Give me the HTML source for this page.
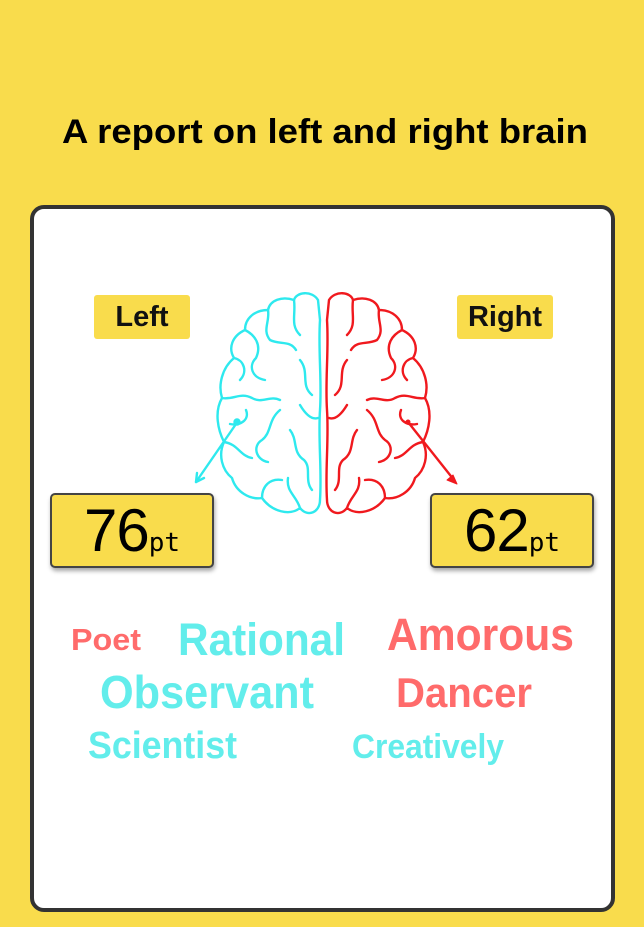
<!DOCTYPE html>
<html><head><meta charset="utf-8"><style>
html,body{margin:0;padding:0;}
body{width:644px;height:927px;background:#F9DC4C;position:relative;overflow:hidden;font-family:"Liberation Sans",sans-serif;}
.card{position:absolute;left:30px;top:205px;width:577px;height:699px;background:#fff;border:4px solid #333;border-radius:14px;}
.lab{position:absolute;top:295px;width:96px;height:44px;background:#F9DC4C;border-radius:3px;font-weight:bold;font-size:29px;text-align:center;line-height:44px;color:#111;}
.score{position:absolute;top:493px;width:164px;height:75px;background:#F9DC4C;border:2px solid #444;border-radius:5px;box-shadow:1px 3px 4px rgba(0,0,0,.35);box-sizing:border-box;text-align:center;color:#000;}
.score b{font-weight:normal;font-family:"Liberation Sans",sans-serif;font-size:60px;line-height:72px;letter-spacing:-1px;}
.score i{font-style:normal;font-family:"DejaVu Sans Mono","Liberation Mono",monospace;font-size:26px;}
svg{position:absolute;left:0;top:0;}
</style></head><body>
<div class="card"></div>
<div class="lab" style="left:94px">Left</div>
<div class="lab" style="left:457px">Right</div>
<div class="score" style="left:50px"><b>76</b><i>pt</i></div>
<div class="score" style="left:430px"><b>62</b><i>pt</i></div>
<svg width="644" height="927" viewBox="0 0 644 927">
<text x="62" y="143" textLength="526" lengthAdjust="spacingAndGlyphs" font-family="Liberation Sans" font-weight="bold" font-size="34" fill="#000">A report on left and right brain</text>
<g fill="none" stroke-width="2.4" stroke-linecap="round" stroke-linejoin="round">
<g id="L" stroke="#2EE9EE">
<path d="M318,300 C312,290 296,292 294,300 C282,296 270,300 268,310 C255,310 245,318 245,330 C232,336 228,348 234,358 C222,368 218,385 222,398 C214,412 218,430 224,442 C218,455 222,470 232,478 C236,492 250,500 262,498 C272,512 290,516 300,508 C308,518 320,512 320,500 C322,470 318,440 320,410 C322,380 318,350 320,320 Z"/>
<path d="M294,300 C296,315 290,325 300,335 M268,310 C270,322 262,330 270,340 C280,345 290,340 296,350 M245,330 C255,335 262,345 256,358 C248,366 252,378 265,380 M234,358 C244,360 248,372 240,380 M222,398 C234,400 240,392 252,398 C262,404 270,395 280,400 M300,360 C310,372 300,385 312,395 M280,410 C268,420 272,432 262,440 C252,446 256,460 268,462 M224,442 C238,444 240,456 252,458 M290,430 C298,440 292,452 304,460 C312,468 304,480 312,490 M262,498 C262,486 270,478 282,480 M300,508 C296,495 286,492 288,478 M246,410 C250,420 240,426 230,424 M300,405 C306,415 312,420 318,418"/>
<path d="M236,424 L196,482"/>
<circle cx="237" cy="422" r="2.5" fill="#2EE9EE"/>
<path d="M196,482 l1,-9 m-1,9 l8,-4"/>
</g>
<g stroke="#F0191E" transform="translate(647,0) scale(-1,1)">
<path d="M318,300 C312,290 296,292 294,300 C282,296 270,300 268,310 C255,310 245,318 245,330 C232,336 228,348 234,358 C222,368 218,385 222,398 C214,412 218,430 224,442 C218,455 222,470 232,478 C236,492 250,500 262,498 C272,512 290,516 300,508 C308,518 320,512 320,500 C322,470 318,440 320,410 C322,380 318,350 320,320 Z"/>
<path d="M294,300 C296,315 290,325 300,335 M268,310 C270,322 262,330 270,340 C280,345 290,340 296,350 M245,330 C255,335 262,345 256,358 C248,366 252,378 265,380 M234,358 C244,360 248,372 240,380 M222,398 C234,400 240,392 252,398 C262,404 270,395 280,400 M300,360 C310,372 300,385 312,395 M280,410 C268,420 272,432 262,440 C252,446 256,460 268,462 M224,442 C238,444 240,456 252,458 M290,430 C298,440 292,452 304,460 C312,468 304,480 312,490 M262,498 C262,486 270,478 282,480 M300,508 C296,495 286,492 288,478 M246,410 C250,420 240,426 230,424 M300,405 C306,415 312,420 318,418"/>
</g>
<path d="M408,422 L454,480" stroke="#F0191E"/>
<circle cx="408" cy="422" r="2.5" fill="#F0191E" stroke="none"/>
<path d="M457,484 l-10,-4 l6,-5 z" fill="#F0191E" stroke="#F0191E" stroke-width="1"/>
</g>
<g font-family="Liberation Sans" font-weight="bold">
<text x="71" y="650" textLength="70" lengthAdjust="spacingAndGlyphs" font-size="31" fill="#FF6B6B">Poet</text>
<text x="178" y="655" textLength="167" lengthAdjust="spacingAndGlyphs" font-size="45" fill="#62EDEB">Rational</text>
<text x="387" y="650" textLength="187" lengthAdjust="spacingAndGlyphs" font-size="45" fill="#FF6B6B">Amorous</text>
<text x="100" y="708" textLength="214" lengthAdjust="spacingAndGlyphs" font-size="46" fill="#62EDEB">Observant</text>
<text x="396" y="707" textLength="136" lengthAdjust="spacingAndGlyphs" font-size="42" fill="#FF6B6B">Dancer</text>
<text x="88" y="758" textLength="149" lengthAdjust="spacingAndGlyphs" font-size="38" fill="#62EDEB">Scientist</text>
<text x="352" y="758" textLength="152" lengthAdjust="spacingAndGlyphs" font-size="34" fill="#62EDEB">Creatively</text>
</g>
</svg>
</body></html>
